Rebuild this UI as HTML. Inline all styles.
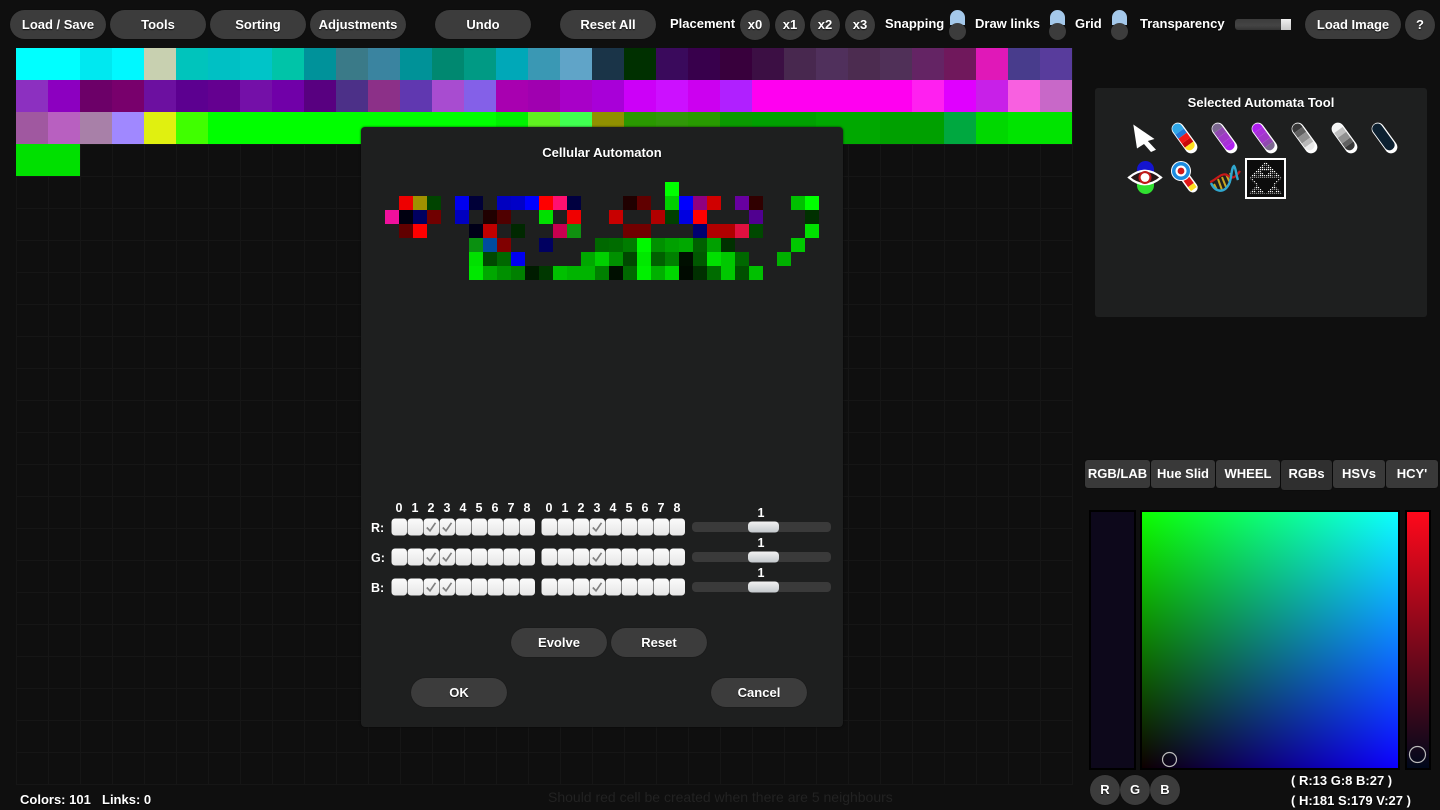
<!DOCTYPE html>
<html>
<head>
<meta charset="utf-8">
<title>Palette</title>
<style>
html,body{margin:0;padding:0;width:1440px;height:810px;overflow:hidden;background:#0f0f0f}
body{position:relative;font-family:"Liberation Sans",sans-serif;color:#fff;font-size:13px;font-weight:bold}
.a{position:absolute;white-space:nowrap}
.t{position:absolute;white-space:nowrap;text-shadow:0 1px 1px #000}
.b{position:absolute;height:29px;line-height:30px;border-radius:15px;background:#3c3c3c;text-align:center;text-shadow:0 1px 1px #111;box-shadow:0 0 1px rgba(0,0,0,.6);top:10px;width:96px}
.c{width:30px;height:30px;line-height:30px}
.tab{position:absolute;top:460px;height:28px;line-height:28px;background:#393939;border-radius:3px;text-align:center;box-shadow:0 0 1px #000;font-size:13px}
.tg{position:absolute;top:10px;width:16px;height:30px}
.tg i{position:absolute;left:0;top:0;width:15px;height:15px;background:#a4c8ea;border-radius:8px 8px 0 0}
.tg b{position:absolute;left:-1px;top:13px;width:17px;height:17px;background:#3c3c3c;border-radius:9px}
svg{position:absolute;left:0;top:0}
</style>
</head>
<body>

<div class="a" style="left:16px;top:48px;width:1057px;height:737px;background-image:linear-gradient(#161616 1px,transparent 1px),linear-gradient(90deg,#161616 1px,transparent 1px);background-size:32px 32px"></div>

<svg width="1440" height="810" shape-rendering="crispEdges">
<g transform="translate(16,48)">
<rect x="0" width="64" height="32" fill="#00ffff"/><rect x="64" width="32" height="32" fill="#00e8f0"/><rect x="96" width="32" height="32" fill="#00f8ff"/><rect x="128" width="32" height="32" fill="#c8d0b0"/><rect x="160" width="32" height="32" fill="#00c4bc"/><rect x="192" width="32" height="32" fill="#00c0c4"/><rect x="224" width="32" height="32" fill="#00c4c8"/><rect x="256" width="32" height="32" fill="#00c4a8"/><rect x="288" width="32" height="32" fill="#00929a"/><rect x="320" width="32" height="32" fill="#3a7a88"/><rect x="352" width="32" height="32" fill="#3a84a0"/><rect x="384" width="32" height="32" fill="#009298"/><rect x="416" width="32" height="32" fill="#008870"/><rect x="448" width="32" height="32" fill="#009a84"/><rect x="480" width="32" height="32" fill="#00a8b8"/><rect x="512" width="32" height="32" fill="#3a98b4"/><rect x="544" width="32" height="32" fill="#60a4c8"/><rect x="576" width="32" height="32" fill="#1a3448"/><rect x="608" width="32" height="32" fill="#003000"/><rect x="640" width="32" height="32" fill="#3a0a5c"/><rect x="672" width="32" height="32" fill="#38004c"/><rect x="704" width="32" height="32" fill="#38003c"/><rect x="736" width="32" height="32" fill="#3c0f44"/><rect x="768" width="32" height="32" fill="#48284f"/><rect x="800" width="32" height="32" fill="#50305c"/><rect x="832" width="32" height="32" fill="#4c2c50"/><rect x="864" width="32" height="32" fill="#503058"/><rect x="896" width="32" height="32" fill="#642464"/><rect x="928" width="32" height="32" fill="#70185c"/><rect x="960" width="32" height="32" fill="#e018b8"/><rect x="992" width="32" height="32" fill="#483c8c"/><rect x="1024" width="32" height="32" fill="#583c9c"/>
</g>
<g transform="translate(16,80)">
<rect x="0" width="32" height="32" fill="#8c30c0"/><rect x="32" width="32" height="32" fill="#8c00c0"/><rect x="64" width="32" height="32" fill="#6c0068"/><rect x="96" width="32" height="32" fill="#78006c"/><rect x="128" width="32" height="32" fill="#6c10a0"/><rect x="160" width="32" height="32" fill="#5c0090"/><rect x="192" width="32" height="32" fill="#640090"/><rect x="224" width="32" height="32" fill="#7410a8"/><rect x="256" width="32" height="32" fill="#7000a8"/><rect x="288" width="32" height="32" fill="#580080"/><rect x="320" width="32" height="32" fill="#4c3088"/><rect x="352" width="32" height="32" fill="#8c3088"/><rect x="384" width="32" height="32" fill="#6038b0"/><rect x="416" width="32" height="32" fill="#a84cd0"/><rect x="448" width="32" height="32" fill="#8460e8"/><rect x="480" width="32" height="32" fill="#a800b0"/><rect x="512" width="32" height="32" fill="#a000b0"/><rect x="544" width="32" height="32" fill="#a800c8"/><rect x="576" width="32" height="32" fill="#a800d8"/><rect x="608" width="32" height="32" fill="#cc00f8"/><rect x="640" width="32" height="32" fill="#cc10ff"/><rect x="672" width="32" height="32" fill="#cc00f0"/><rect x="704" width="32" height="32" fill="#b020ff"/><rect x="736" width="160" height="32" fill="#ff00f0"/><rect x="896" width="32" height="32" fill="#ff20f0"/><rect x="928" width="32" height="32" fill="#e000ff"/><rect x="960" width="32" height="32" fill="#c820e8"/><rect x="992" width="32" height="32" fill="#f860e0"/><rect x="1024" width="32" height="32" fill="#c868c8"/>
</g>
<g transform="translate(16,112)">
<rect x="0" width="32" height="32" fill="#a058a0"/><rect x="32" width="32" height="32" fill="#b860c0"/><rect x="64" width="32" height="32" fill="#a880a8"/><rect x="96" width="32" height="32" fill="#a088ff"/><rect x="128" width="32" height="32" fill="#e0f010"/><rect x="160" width="32" height="32" fill="#40ff00"/><rect x="192" width="288" height="32" fill="#00ff00"/><rect x="480" width="32" height="32" fill="#00f000"/><rect x="512" width="32" height="32" fill="#60f020"/><rect x="544" width="32" height="32" fill="#40ff50"/><rect x="576" width="32" height="32" fill="#909000"/><rect x="608" width="32" height="32" fill="#2a9800"/><rect x="640" width="32" height="32" fill="#309808"/><rect x="672" width="32" height="32" fill="#289a00"/><rect x="704" width="32" height="32" fill="#0a9a00"/><rect x="736" width="64" height="32" fill="#00a000"/><rect x="800" width="64" height="32" fill="#00a800"/><rect x="864" width="64" height="32" fill="#00a000"/><rect x="928" width="32" height="32" fill="#00a840"/><rect x="960" width="32" height="32" fill="#00d800"/><rect x="992" width="64" height="32" fill="#00e400"/>
</g>
<rect x="16" y="144" width="64" height="32" fill="#00e000"/>
</svg>

<!-- top bar -->
<div class="b" style="left:10px">Load / Save</div>
<div class="b" style="left:110px">Tools</div>
<div class="b" style="left:210px">Sorting</div>
<div class="b" style="left:310px">Adjustments</div>
<div class="b" style="left:435px">Undo</div>
<div class="b" style="left:560px">Reset All</div>
<div class="t" style="left:670px;top:16px">Placement</div>
<div class="b c" style="left:740px">x0</div>
<div class="b c" style="left:775px">x1</div>
<div class="b c" style="left:810px">x2</div>
<div class="b c" style="left:845px">x3</div>
<div class="t" style="left:885px;top:16px">Snapping</div>
<div class="tg" style="left:950px"><i></i><b></b></div>
<div class="t" style="left:975px;top:16px">Draw links</div>
<div class="tg" style="left:1050px"><i></i><b></b></div>
<div class="t" style="left:1075px;top:16px">Grid</div>
<div class="tg" style="left:1112px"><i></i><b></b></div>
<div class="t" style="left:1140px;top:16px">Transparency</div>
<div class="a" style="left:1235px;top:19px;width:56px;height:11px;border-radius:3px;background:linear-gradient(#3c3c3c,#444 60%,#333)"></div>
<div class="a" style="left:1281px;top:19px;width:10px;height:11px;background:linear-gradient(#f0f0f0,#c8c8c8)"></div>
<div class="b" style="left:1305px">Load Image</div>
<div class="b c" style="left:1405px;top:10px">?</div>

<!-- tool panel -->
<div class="a" style="left:1095px;top:88px;width:332px;height:229px;background:#1e1f1f;border-radius:3px"></div>
<div class="t" style="left:1095px;width:332px;top:95px;text-align:center;font-size:13px">Selected Automata Tool</div>
<svg width="1440" height="810">
<defs>
<clipPath id="pen"><rect x="-5.4" y="-16.8" width="10.4" height="30.6" rx="5"/></clipPath>
<pattern id="dots" x="0" y="0" width="2" height="2" patternUnits="userSpaceOnUse"><rect width="1.2" height="1.2" fill="#fff"/></pattern>
</defs>
<!-- arrow -->
<path d="M1133.3 124.5 L1154.5 139 L1147.8 141 L1156 149.7 L1151 152 L1144 144 L1137 148.5 Z" fill="#fff"/>
<!-- pen 1 -->
<g transform="translate(1184.5,138) rotate(-36)"><rect x="-6.3" y="-17.5" width="12.6" height="35" rx="6.3" fill="#fff"/><g clip-path="url(#pen)"><rect x="-6" y="-17" width="12" height="9" fill="#30a8e8"/><rect x="-6" y="-8" width="12" height="5" fill="#2078d8"/><rect x="-6" y="-3" width="12" height="6" fill="#f01818"/><rect x="-6" y="3" width="12" height="5" fill="#c80808"/><rect x="-6" y="8" width="12" height="6" fill="#ffe020"/></g></g>
<!-- pen 2 -->
<g transform="translate(1224.5,138) rotate(-36)"><rect x="-6.3" y="-17.5" width="12.6" height="35" rx="6.3" fill="#fff"/><g clip-path="url(#pen)"><rect x="-6" y="-17" width="12" height="7" fill="#7c6890"/><rect x="-6" y="-10" width="12" height="6" fill="#9048b0"/><rect x="-6" y="-4" width="12" height="7" fill="#a038c8"/><rect x="-6" y="3" width="12" height="5" fill="#a830d8"/><rect x="-6" y="8" width="12" height="6" fill="#b020f0"/></g></g>
<!-- pen 3 -->
<g transform="translate(1264.5,138) rotate(-36)"><rect x="-6.3" y="-17.5" width="12.6" height="35" rx="6.3" fill="#fff"/><g clip-path="url(#pen)"><rect x="-6" y="-17" width="12" height="7" fill="#b020f0"/><rect x="-6" y="-10" width="12" height="6" fill="#a830d8"/><rect x="-6" y="-4" width="12" height="7" fill="#a038c8"/><rect x="-6" y="3" width="12" height="5" fill="#9048b0"/><rect x="-6" y="8" width="12" height="6" fill="#7c6890"/></g></g>
<!-- pen 4 -->
<g transform="translate(1304.5,138) rotate(-36)"><rect x="-6.3" y="-17.5" width="12.6" height="35" rx="6.3" fill="#fff"/><g clip-path="url(#pen)"><rect x="-6" y="-17" width="12" height="7" fill="#383838"/><rect x="-6" y="-10" width="12" height="6" fill="#606060"/><rect x="-6" y="-4" width="12" height="7" fill="#909090"/><rect x="-6" y="3" width="12" height="5" fill="#b8b8b8"/><rect x="-6" y="8" width="12" height="6" fill="#e8e8e8"/></g></g>
<!-- pen 5 -->
<g transform="translate(1344.5,138) rotate(-36)"><rect x="-6.3" y="-17.5" width="12.6" height="35" rx="6.3" fill="#fff"/><g clip-path="url(#pen)"><rect x="-6" y="-17" width="12" height="7" fill="#f4f4f4"/><rect x="-6" y="-10" width="12" height="6" fill="#c0c0c0"/><rect x="-6" y="-4" width="12" height="7" fill="#909090"/><rect x="-6" y="3" width="12" height="5" fill="#606060"/><rect x="-6" y="8" width="12" height="6" fill="#383838"/></g></g>
<!-- pen 6 -->
<g transform="translate(1384.5,138) rotate(-36)"><rect x="-6.3" y="-17.5" width="12.6" height="35" rx="6.3" fill="#fff"/><rect x="-5.4" y="-16.8" width="10.4" height="30.6" rx="5" fill="#0c2030"/></g>
<!-- eye -->
<rect x="1137" y="161" width="17" height="18" rx="8.5" fill="#1414d0"/>
<rect x="1137" y="176" width="17" height="18" rx="8.5" fill="#30e030"/>
<path d="M1129 177.5 Q1145 164 1161 177.5 Q1145 191 1129 177.5 Z" fill="#281818" stroke="#fff" stroke-width="2.2"/>
<circle cx="1145" cy="177.5" r="6.5" fill="#c01818"/><circle cx="1145" cy="177.5" r="4.4" fill="#fff"/>
<!-- magnifier -->
<g transform="translate(1188,181) rotate(-36)"><rect x="-5" y="-11" width="10" height="24" rx="5" fill="#fff"/><rect x="-3.5" y="-9" width="7" height="6" fill="#3090d8"/><rect x="-3.5" y="-3" width="7" height="8" fill="#e01818"/><rect x="-3.5" y="5" width="7" height="5" fill="#ffe020"/></g>
<circle cx="1181" cy="171" r="10" fill="#fff"/><circle cx="1181" cy="171" r="9" fill="#1c8ce0"/><circle cx="1181" cy="171" r="5.5" fill="#fff"/><circle cx="1181" cy="171" r="3.4" fill="#d01818"/>
<!-- dna -->
<path d="M1214 184 L1217 190 M1218 179 L1222 190 M1222 177 L1226 187 M1226 174 L1230 183 M1230 173 L1232 178" stroke="#c8a820" stroke-width="2" fill="none"/>
<path d="M1210 182 C1215 181 1221 172 1227 175 C1231 178 1234 180 1240 171" stroke="#c81818" stroke-width="2.2" fill="none"/>
<path d="M1211 183 C1215 192 1224 194 1229 184 C1232 178 1231 168 1234 166 C1236 168 1236 175 1238 180" stroke="#30a8d0" stroke-width="2.4" fill="none"/>
<!-- selected tool -->
<rect x="1246" y="159" width="39" height="39" fill="#0c0c0c" stroke="#fff" stroke-width="2"/>
<g transform="translate(1242,155)">
<path d="M23.5 6.5 L39.5 22.5 L7.5 22.5 Z" fill="url(#dots)"/>
<path d="M18 15.5 L29 15.5 L23.5 21 Z M20.5 10.5 L26.5 10.5 L23.5 13.5 Z M12.5 18.5 L18.5 18.5 L15.5 21.5 Z M28.5 18.5 L34.5 18.5 L31.5 21.5 Z" fill="#0c0c0c"/>
<path d="M15 30 L23 38.5 L7 38.5 Z M32 30 L40 38.5 L24 38.5 Z" fill="url(#dots)"/>
<path d="M12 34.5 L18 34.5 L15 37.5 Z M29 34.5 L35 34.5 L32 37.5 Z" fill="#0c0c0c"/>
<path d="M7.5 23 L9.5 23 L16.5 30 L14.5 30 Z M39.5 23 L37.5 23 L30.5 30 L32.5 30 Z" fill="url(#dots)"/>
</g>
</svg>

<!-- tabs -->
<div class="tab" style="left:1085px;width:65px">RGB/LAB</div>
<div class="tab" style="left:1151px;width:64px">Hue Slid</div>
<div class="tab" style="left:1216px;width:64px">WHEEL</div>
<div class="tab" style="left:1281px;width:51px;height:30px;background:#2f2f2f">RGBs</div>
<div class="tab" style="left:1333px;width:52px">HSVs</div>
<div class="tab" style="left:1386px;width:52px">HCY'</div>

<!-- colour picker -->
<div class="a" style="left:1089px;top:510px;width:43px;height:256px;background:#0d081b;border:2px solid #000"></div>
<div class="a" style="left:1140px;top:510px;width:256px;height:256px;border:2px solid #000;background-color:#0d0000;background-image:linear-gradient(to top,#000,#0f0),linear-gradient(to right,#000,#00f);background-blend-mode:screen"></div>
<div class="a" style="left:1405px;top:510px;width:22px;height:256px;border:2px solid #000;background:linear-gradient(#ff081b,#00081b)"></div>
<svg width="1440" height="810">
<circle cx="1169.5" cy="759.5" r="7" fill="none" stroke="#bbb" stroke-width="1.2"/>
<circle cx="1417.5" cy="754.5" r="8" fill="none" stroke="#bbb" stroke-width="1.2"/>
</svg>
<div class="b c" style="left:1090px;top:775px">R</div>
<div class="b c" style="left:1120px;top:775px">G</div>
<div class="b c" style="left:1150px;top:775px">B</div>
<div class="t" style="left:1291px;top:773px;font-size:13px">( R:13 G:8 B:27 )</div>
<div class="t" style="left:1291px;top:793px;font-size:13px">( H:181 S:179 V:27 )</div>

<!-- status -->
<div class="t" style="left:20px;top:792px;font-size:13px">Colors: 101</div>
<div class="t" style="left:102px;top:792px;font-size:13px">Links: 0</div>
<div class="a" style="left:548px;top:789px;color:#222;font-size:14px;font-weight:normal">Should red cell be created when there are 5 neighbours</div>

<!-- dialog -->
<div class="a" style="left:361px;top:127px;width:482px;height:600px;background:#1e1f1f;border-radius:4px;box-shadow:0 0 2px rgba(0,0,0,.7)"></div>
<div class="t" style="left:361px;width:482px;top:145px;line-height:16px;text-align:center;font-size:13px">Cellular Automaton</div>

<svg width="1440" height="810" shape-rendering="crispEdges">
<g transform="translate(385,182)">
<rect x="280" y="0" width="14" height="14" fill="#00ff00"/>
<rect x="14" y="14" width="14" height="14" fill="#ee0000"/><rect x="28" y="14" width="14" height="14" fill="#a09000"/><rect x="42" y="14" width="14" height="14" fill="#004400"/><rect x="70" y="14" width="14" height="14" fill="#0000f0"/><rect x="84" y="14" width="14" height="14" fill="#000038"/><rect x="112" y="14" width="14" height="14" fill="#0000c0"/><rect x="126" y="14" width="14" height="14" fill="#0000c8"/><rect x="140" y="14" width="14" height="14" fill="#0000ff"/><rect x="154" y="14" width="14" height="14" fill="#ff0000"/><rect x="168" y="14" width="14" height="14" fill="#ff1070"/><rect x="182" y="14" width="14" height="14" fill="#000040"/><rect x="238" y="14" width="14" height="14" fill="#200000"/><rect x="252" y="14" width="14" height="14" fill="#600000"/><rect x="280" y="14" width="14" height="14" fill="#00d000"/><rect x="294" y="14" width="14" height="14" fill="#0000ff"/><rect x="308" y="14" width="14" height="14" fill="#900080"/><rect x="322" y="14" width="14" height="14" fill="#d00000"/><rect x="350" y="14" width="14" height="14" fill="#6800a0"/><rect x="364" y="14" width="14" height="14" fill="#300000"/><rect x="406" y="14" width="14" height="14" fill="#00c000"/><rect x="420" y="14" width="14" height="14" fill="#00ff00"/>
<rect x="0" y="28" width="14" height="14" fill="#f0109c"/><rect x="14" y="28" width="14" height="14" fill="#000010"/><rect x="28" y="28" width="14" height="14" fill="#000060"/><rect x="42" y="28" width="14" height="14" fill="#700000"/><rect x="70" y="28" width="14" height="14" fill="#0000c0"/><rect x="98" y="28" width="14" height="14" fill="#200000"/><rect x="112" y="28" width="14" height="14" fill="#500000"/><rect x="154" y="28" width="14" height="14" fill="#00e000"/><rect x="182" y="28" width="14" height="14" fill="#f00000"/><rect x="224" y="28" width="14" height="14" fill="#c80000"/><rect x="266" y="28" width="14" height="14" fill="#b00000"/><rect x="280" y="28" width="14" height="14" fill="#004000"/><rect x="294" y="28" width="14" height="14" fill="#0000e0"/><rect x="308" y="28" width="14" height="14" fill="#ff0000"/><rect x="364" y="28" width="14" height="14" fill="#500090"/><rect x="420" y="28" width="14" height="14" fill="#003000"/>
<rect x="14" y="42" width="14" height="14" fill="#600000"/><rect x="28" y="42" width="14" height="14" fill="#ff0000"/><rect x="84" y="42" width="14" height="14" fill="#000018"/><rect x="98" y="42" width="14" height="14" fill="#c00000"/><rect x="126" y="42" width="14" height="14" fill="#002800"/><rect x="168" y="42" width="14" height="14" fill="#c80050"/><rect x="182" y="42" width="14" height="14" fill="#109010"/><rect x="238" y="42" width="28" height="14" fill="#700000"/><rect x="308" y="42" width="14" height="14" fill="#000070"/><rect x="322" y="42" width="28" height="14" fill="#b00000"/><rect x="350" y="42" width="14" height="14" fill="#e01040"/><rect x="364" y="42" width="14" height="14" fill="#004800"/><rect x="420" y="42" width="14" height="14" fill="#00e000"/>
<rect x="84" y="56" width="14" height="14" fill="#0a9010"/><rect x="98" y="56" width="14" height="14" fill="#004ca0"/><rect x="112" y="56" width="14" height="14" fill="#800000"/><rect x="154" y="56" width="14" height="14" fill="#000060"/><rect x="210" y="56" width="14" height="14" fill="#006800"/><rect x="224" y="56" width="14" height="14" fill="#006c00"/><rect x="238" y="56" width="14" height="14" fill="#007c00"/><rect x="252" y="56" width="14" height="14" fill="#00f800"/><rect x="266" y="56" width="14" height="14" fill="#009000"/><rect x="280" y="56" width="14" height="14" fill="#00a000"/><rect x="294" y="56" width="14" height="14" fill="#00a800"/><rect x="308" y="56" width="14" height="14" fill="#006000"/><rect x="322" y="56" width="14" height="14" fill="#00a000"/><rect x="336" y="56" width="14" height="14" fill="#003000"/><rect x="406" y="56" width="14" height="14" fill="#00c800"/>
<rect x="84" y="70" width="14" height="14" fill="#00e000"/><rect x="98" y="70" width="14" height="14" fill="#004800"/><rect x="112" y="70" width="14" height="14" fill="#006800"/><rect x="126" y="70" width="14" height="14" fill="#0000f0"/><rect x="196" y="70" width="14" height="14" fill="#00a800"/><rect x="210" y="70" width="14" height="14" fill="#00d000"/><rect x="224" y="70" width="14" height="14" fill="#009000"/><rect x="238" y="70" width="14" height="14" fill="#004800"/><rect x="252" y="70" width="14" height="14" fill="#00e800"/><rect x="266" y="70" width="14" height="14" fill="#006000"/><rect x="280" y="70" width="14" height="14" fill="#008000"/><rect x="294" y="70" width="14" height="14" fill="#000f00"/><rect x="308" y="70" width="14" height="14" fill="#005800"/><rect x="322" y="70" width="14" height="14" fill="#00e000"/><rect x="336" y="70" width="14" height="14" fill="#00c800"/><rect x="350" y="70" width="14" height="14" fill="#006800"/><rect x="392" y="70" width="14" height="14" fill="#00b000"/>
<rect x="84" y="84" width="14" height="14" fill="#00e800"/><rect x="98" y="84" width="14" height="14" fill="#00a800"/><rect x="112" y="84" width="14" height="14" fill="#009000"/><rect x="126" y="84" width="14" height="14" fill="#008000"/><rect x="140" y="84" width="14" height="14" fill="#001c00"/><rect x="154" y="84" width="14" height="14" fill="#003800"/><rect x="168" y="84" width="14" height="14" fill="#00c000"/><rect x="182" y="84" width="28" height="14" fill="#00b400"/><rect x="210" y="84" width="14" height="14" fill="#008000"/><rect x="224" y="84" width="14" height="14" fill="#000f00"/><rect x="238" y="84" width="14" height="14" fill="#006800"/><rect x="252" y="84" width="14" height="14" fill="#00f000"/><rect x="266" y="84" width="14" height="14" fill="#00b000"/><rect x="280" y="84" width="14" height="14" fill="#00d800"/><rect x="294" y="84" width="14" height="14" fill="#000a00"/><rect x="308" y="84" width="14" height="14" fill="#003000"/><rect x="322" y="84" width="14" height="14" fill="#006c00"/><rect x="336" y="84" width="14" height="14" fill="#00c800"/><rect x="350" y="84" width="14" height="14" fill="#005000"/><rect x="364" y="84" width="14" height="14" fill="#00c000"/>
</g>
</svg>

<!-- rule table -->
<svg width="1440" height="810" font-family="'Liberation Sans',sans-serif" font-weight="bold" font-size="12.5" fill="#fff">
<defs>
<linearGradient id="cb" x1="0" y1="0" x2="0" y2="1"><stop offset="0" stop-color="#fbfbfb"/><stop offset="1" stop-color="#e6e6e6"/></linearGradient>
<linearGradient id="th" x1="0" y1="0" x2="0" y2="1"><stop offset="0" stop-color="#f2f2f2"/><stop offset="1" stop-color="#c4c8cc"/></linearGradient>
<g id="bx"><rect x="0.5" y="0.5" width="15.5" height="17" rx="3.5" fill="url(#cb)"/></g>
<g id="ck"><use href="#bx"/><path d="M3.8 9.5 L7 12.8 L12.5 4.8" fill="none" stroke="#808080" stroke-width="1.7"/></g>
<g id="rw">
<use href="#bx" x="0"/><use href="#bx" x="16"/><use href="#ck" x="32"/><use href="#ck" x="48"/><use href="#bx" x="64"/><use href="#bx" x="80"/><use href="#bx" x="96"/><use href="#bx" x="112"/><use href="#bx" x="128"/>
<use href="#bx" x="150"/><use href="#bx" x="166"/><use href="#bx" x="182"/><use href="#ck" x="198"/><use href="#bx" x="214"/><use href="#bx" x="230"/><use href="#bx" x="246"/><use href="#bx" x="262"/><use href="#bx" x="278"/>
<rect x="301" y="4" width="139" height="10" rx="4" fill="#3a3a3a"/>
<rect x="357" y="3.5" width="31" height="11" rx="4" fill="url(#th)"/>
</g>
</defs>
<use href="#rw" x="391" y="518"/>
<use href="#rw" x="391" y="548"/>
<use href="#rw" x="391" y="578"/>
<g text-anchor="middle">
<text x="399" y="512">0</text><text x="415" y="512">1</text><text x="431" y="512">2</text><text x="447" y="512">3</text><text x="463" y="512">4</text><text x="479" y="512">5</text><text x="495" y="512">6</text><text x="511" y="512">7</text><text x="527" y="512">8</text>
<text x="549" y="512">0</text><text x="565" y="512">1</text><text x="581" y="512">2</text><text x="597" y="512">3</text><text x="613" y="512">4</text><text x="629" y="512">5</text><text x="645" y="512">6</text><text x="661" y="512">7</text><text x="677" y="512">8</text>
<text x="761" y="517">1</text><text x="761" y="547">1</text><text x="761" y="577">1</text>
</g>
<text x="371" y="532">R:</text><text x="371" y="562">G:</text><text x="371" y="592">B:</text>
</svg>

<div class="b" style="left:511px;top:628px;width:96px">Evolve</div>
<div class="b" style="left:611px;top:628px;width:96px">Reset</div>
<div class="b" style="left:411px;top:678px;width:96px">OK</div>
<div class="b" style="left:711px;top:678px;width:96px">Cancel</div>

</body>
</html>
